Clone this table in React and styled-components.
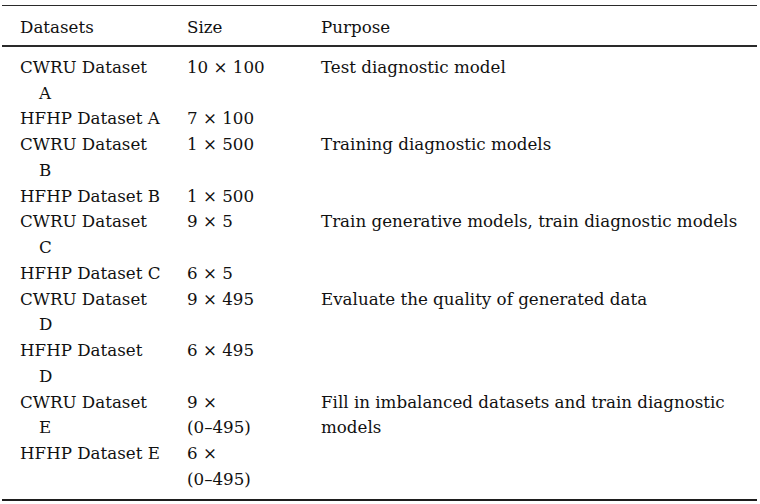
import React from "react";
import styled, { createGlobalStyle } from "styled-components";

const Global = createGlobalStyle`
  html, body { margin: 0; padding: 0; background: #ffffff; }
  body { font-family: "DejaVu Serif", "Liberation Serif", serif; color: #111111; }
`;

const Page = styled.div`
  width: 760px;
  height: 504px;
  padding: 5px 3px 0 2px;
  box-sizing: border-box;
  background: #fff;
`;

const Table = styled.table`
  width: 755px;
  border-collapse: collapse;
  table-layout: fixed;
  font-size: 16.7px;
  line-height: 25.75px;
  border-top: 1px solid #2a2a2a;
  border-bottom: 2px solid #1e1e1e;
`;

const HeadRow = styled.tr`
  border-bottom: 2px solid #2a2a2a;
`;

const Th = styled.th`
  box-sizing: border-box;
  font-weight: normal;
  text-align: left;
  padding: ${(p) => (p.$first ? "9px 0 4px 18px" : "9px 0 4px 0")};
  width: ${(p) => p.$w || "auto"};
  white-space: nowrap;
`;

const Td = styled.td`
  box-sizing: border-box;
  vertical-align: top;
  text-align: left;
  white-space: nowrap;
  padding: 0;
  padding-top: ${(p) => (p.$topPad ? "8px" : "0")};
  padding-bottom: ${(p) => (p.$botPad ? "6px" : "0")};
`;

const NameCell = styled(Td)`
  padding-left: 37px;
  text-indent: -19px;
`;

const rows = [
  { name: ["CWRU Dataset", "A"], size: ["10 × 100"], purpose: ["Test diagnostic model"] },
  { name: ["HFHP Dataset A"], size: ["7 × 100"], purpose: [] },
  { name: ["CWRU Dataset", "B"], size: ["1 × 500"], purpose: ["Training diagnostic models"] },
  { name: ["HFHP Dataset B"], size: ["1 × 500"], purpose: [] },
  { name: ["CWRU Dataset", "C"], size: ["9 × 5"], purpose: ["Train generative models, train diagnostic models"] },
  { name: ["HFHP Dataset C"], size: ["6 × 5"], purpose: [] },
  { name: ["CWRU Dataset", "D"], size: ["9 × 495"], purpose: ["Evaluate the quality of generated data"] },
  { name: ["HFHP Dataset", "D"], size: ["6 × 495"], purpose: [] },
  { name: ["CWRU Dataset", "E"], size: ["9 ×", "(0–495)"], purpose: ["Fill in imbalanced datasets and train diagnostic", "models"] },
  { name: ["HFHP Dataset E"], size: ["6 ×", "(0–495)"], purpose: [] },
];

const Lines = ({ lines }) =>
  lines.map((l, i) => (
    <React.Fragment key={i}>
      {i > 0 && <br />}
      {l}
    </React.Fragment>
  ));

export default function App() {
  return (
    <>
      <Global />
      <Page>
        <Table>
          <thead>
            <HeadRow>
              <Th $first $w="185px">Datasets</Th>
              <Th $w="134px">Size</Th>
              <Th>Purpose</Th>
            </HeadRow>
          </thead>
          <tbody>
            {rows.map((r, i) => {
              const first = i === 0;
              const last = i === rows.length - 1;
              return (
                <tr key={i}>
                  <NameCell $topPad={first} $botPad={last}>
                    <Lines lines={r.name} />
                  </NameCell>
                  <Td $topPad={first} $botPad={last}>
                    <Lines lines={r.size} />
                  </Td>
                  <Td $topPad={first} $botPad={last}>
                    <Lines lines={r.purpose} />
                  </Td>
                </tr>
              );
            })}
          </tbody>
        </Table>
      </Page>
    </>
  );
}
